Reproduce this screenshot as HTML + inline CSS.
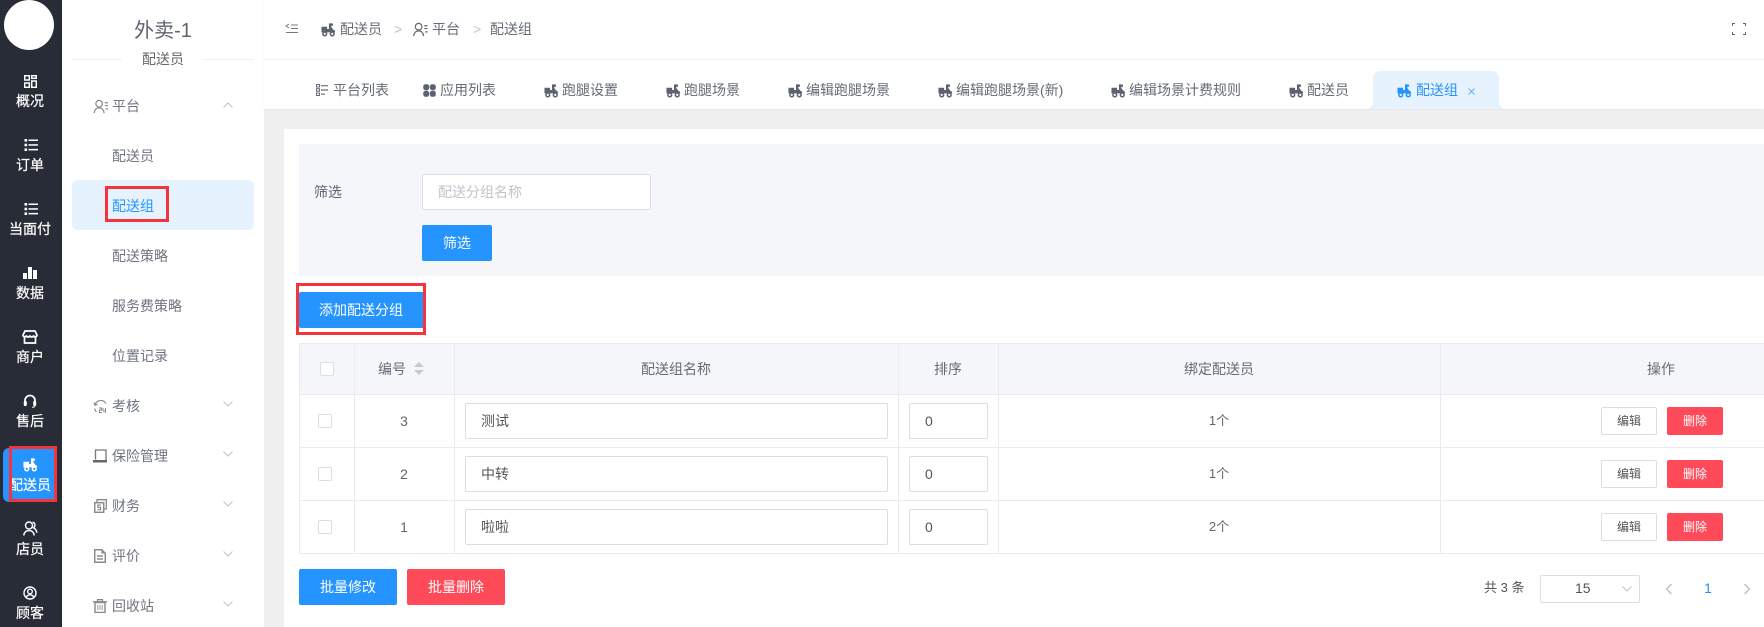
<!DOCTYPE html>
<html lang="zh"><head><meta charset="utf-8"><title>配送组</title>
<style>
*{box-sizing:border-box;margin:0;padding:0}
html,body{width:1764px;height:627px;overflow:hidden;background:#f0f0f0}
body{position:relative;font-family:"Liberation Sans","Noto Sans CJK SC",sans-serif;font-size:14px;color:#606266}
.a{position:absolute}
.t{position:absolute;height:20px;line-height:20px;white-space:nowrap}
.c{transform:translateX(-50%)}
svg{position:absolute;display:block}
.nav{position:absolute;left:0;top:0;width:62px;height:627px;background:#282c36}
.nl{position:absolute;left:0;width:60px;text-align:center;color:#fff;font-size:14px;height:20px;line-height:20px;white-space:nowrap;-webkit-text-stroke:.2px #fff}
.ni{color:#fff}
.m{color:#6f7480}
.mi{color:#8a8a8a}
.b{position:absolute;border-radius:2px;color:#fff;text-align:center;background:#2594ff}
.r{background:#ff4a59}
.inp{position:absolute;background:#fff;border:1px solid #dcdee6;border-radius:2px;height:36px;line-height:34px;color:#555}
.hl{position:absolute;background:#e9ebf1}
.cb{position:absolute;width:14px;height:14px;background:#fff;border:1px solid #dcdee6;border-radius:2px}
.tab{color:#666b75}
</style></head><body>
<svg width="0" height="0" style="position:absolute"><defs>
<symbol id="sc" viewBox="0 0 16 16"><path fill="currentColor" d="M.5 5h6v2.500h2V1.500h4l.5 2.500h-2v1.500l2 2.500 2 1.500v1.500H.5z"/><circle cx="4" cy="12.700" r="2" fill="none" stroke="currentColor" stroke-width="1.600"/><circle cx="12" cy="12.700" r="2" fill="none" stroke="currentColor" stroke-width="1.600"/></symbol>
<symbol id="list" viewBox="0 0 14 14"><g fill="currentColor"><rect x=".5" y="1" width="2.600" height="2.600"/><rect x=".5" y="5.700" width="2.600" height="2.600"/><rect x=".5" y="10.400" width="2.600" height="2.600"/><rect x="4.500" y="1.500" width="9.500" height="1.500"/><rect x="4.500" y="6.200" width="9.500" height="1.500"/><rect x="4.500" y="10.900" width="9.500" height="1.500"/></g></symbol>
<symbol id="usr" viewBox="0 0 16 16"><g fill="none" stroke="currentColor" stroke-width="1.300"><circle cx="6" cy="5" r="3.500"/><path d="M.7 15c.5-3.800 2.500-5.500 5.300-5.500s4.800 1.700 5.300 5.500"/><path d="M12 4h3.500M12 7h3.500M13 10.500h2.500"/></g></symbol>
<symbol id="chd" viewBox="0 0 10 6"><path d="M.5.500L5 5 9.500.500" fill="none" stroke="#c0c3ca" stroke-width="1"/></symbol>
<symbol id="chu" viewBox="0 0 10 6"><path d="M.5 5.500L5 1l4.500 4.500" fill="none" stroke="#c0c3ca" stroke-width="1"/></symbol>
</defs></svg>

<!-- dark nav -->
<div class="nav">
<div class="a" style="left:4px;top:0;width:50px;height:50px;border-radius:50%;background:#fff"></div>
<div class="a" style="left:3px;top:448px;width:54px;height:54px;background:#2594ff;border-radius:6px"></div>

<svg class="ni" style="left:24px;top:75px" width="13" height="13" viewBox="0 0 13 13"><g fill="none" stroke="#fff" stroke-width="1.500"><rect x=".7" y=".7" width="4.600" height="4.300"/><rect x="7.700" y=".7" width="4.600" height="2.600"/><rect x=".7" y="8" width="4.600" height="4.300"/><rect x="7.700" y="6" width="4.600" height="6.300"/></g></svg>
<div class="nl" style="top:91px">概况</div>
<svg class="ni" style="left:24px;top:138px" width="14" height="14"><use href="#list"/></svg>
<div class="nl" style="top:155px">订单</div>
<svg class="ni" style="left:24px;top:202px" width="14" height="14"><use href="#list"/></svg>
<div class="nl" style="top:219px">当面付</div>
<svg style="left:23px;top:267px" width="14" height="12" viewBox="0 0 14 12"><path fill="#fff" d="M0 6h4v6H0zM5 0h4v12H5zM10 3h4v9h-4z"/></svg>
<div class="nl" style="top:283px">数据</div>
<svg style="left:22px;top:330px" width="16" height="14" viewBox="0 0 16 14"><g fill="none" stroke="#fff" stroke-width="1.700"><path d="M3 1h10l2 4c0 2-3 2.500-3.500.5-.5 2-3 2-3.500 0-.5 2-3 2-3.500 0C4 7.500 1 7 1 5z"/><path d="M2.500 7v6h11V7"/></g></svg>
<div class="nl" style="top:347px">商户</div>
<svg style="left:23px;top:394px" width="14" height="14" viewBox="0 0 14 14"><path d="M2 9V6.500a5 5 0 0 1 10 0V9" fill="none" stroke="#fff" stroke-width="1.800"/><rect x=".8" y="7" width="3" height="5" rx="1" fill="#fff"/><rect x="10.200" y="7" width="3" height="5" rx="1" fill="#fff"/><path d="M12 12c-.5 1-1.500 1.300-3 1.300" stroke="#fff" fill="none"/></svg>
<div class="nl" style="top:411px">售后</div>
<svg style="left:23px;top:457px;color:#fff" width="15" height="15"><use href="#sc"/></svg>
<div class="nl" style="top:475px">配送员</div>
<svg style="left:23px;top:521px" width="15" height="15" viewBox="0 0 15 15"><g fill="none" stroke="#fff" stroke-width="1.400"><circle cx="6" cy="4.500" r="3.500"/><path d="M.7 14.500c.5-3.500 2.500-5 5.300-5s4.800 1.500 5.300 5"/><path d="M9.500 1.300c2.500 0 3.500 3.500 1 5.500 2 .8 3 3 3.500 5"/></g></svg>
<div class="nl" style="top:539px">店员</div>
<svg style="left:23px;top:586px" width="14" height="14" viewBox="0 0 14 14"><g fill="none" stroke="#fff" stroke-width="1.400"><circle cx="7" cy="7" r="6"/><circle cx="7" cy="5.500" r="2.300"/><path d="M3 11.500c1-2 2.500-2.700 4-2.700s3 .7 4 2.700"/></g></svg>
<div class="nl" style="top:603px">顾客</div>
</div>
<div class="a" style="left:9px;top:446px;width:48px;height:56px;border:3px solid #f5333a"></div>

<!-- secondary menu -->
<div class="a" style="left:62px;top:0;width:202px;height:627px;background:#fff"></div>
<div class="a" style="left:72px;top:59px;width:50px;height:1px;background:#f0f0f0"></div>
<div class="a" style="left:204px;top:59px;width:50px;height:1px;background:#f0f0f0"></div>
<div class="t c m" style="left:163px;top:19px;font-size:20px;height:24px;line-height:24px;color:#5f6470">外卖-1</div>
<div class="t c m" style="left:163px;top:49px;color:#666">配送员</div>

<svg class="mi" style="left:93px;top:99px" width="16" height="15"><use href="#usr"/></svg>
<div class="t m" style="left:112px;top:96px">平台</div>
<svg style="left:223px;top:102px" width="10" height="6"><use href="#chu"/></svg>
<div class="t m" style="left:112px;top:146px">配送员</div>
<div class="a" style="left:72px;top:180px;width:182px;height:50px;border-radius:6px;background:#e6f3ff"></div>
<div class="t" style="left:112px;top:196px;color:#2594ff">配送组</div>
<div class="a" style="left:105px;top:186px;width:64px;height:36px;border:3px solid #f5333a"></div>
<div class="t m" style="left:112px;top:246px">配送策略</div>
<div class="t m" style="left:112px;top:296px">服务费策略</div>
<div class="t m" style="left:112px;top:346px">位置记录</div>

<svg style="left:93px;top:399px" width="15" height="15" viewBox="0 0 15 15"><g fill="none" stroke="#8a8a8a" stroke-width="1.200"><path d="M2 6a6 6 0 0 1 11-1.500"/><path d="M1 3.500l1 2.700 2.500-1"/><path d="M1.500 9.500c.3 1.500 1 2.500 2 3.500"/></g><path d="M6 9h2.500v2H6.500v2.500H9M10 9v3h3M12.500 9v5" fill="none" stroke="#8a8a8a" stroke-width="1"/></svg>
<div class="t m" style="left:112px;top:396px">考核</div>
<svg style="left:223px;top:401px" width="10" height="6"><use href="#chd"/></svg>

<svg style="left:93px;top:449px" width="14" height="14" viewBox="0 0 14 14"><path d="M2.500 10.500V1h10.500v10.500" fill="none" stroke="#777" stroke-width="1.300"/><rect x="0" y="11" width="14" height="2.500" fill="#666"/></svg>
<div class="t m" style="left:112px;top:446px">保险管理</div>
<svg style="left:223px;top:451px" width="10" height="6"><use href="#chd"/></svg>

<svg style="left:94px;top:499px" width="13" height="14" viewBox="0 0 13 14"><path d="M3 3V.7h9.300V10H10" fill="none" stroke="#8a8a8a" stroke-width="1.300"/><rect x=".7" y="3.700" width="9" height="9.600" fill="#fff" stroke="#8a8a8a" stroke-width="1.500"/><path d="M6.800 6H3.800v2.300h2.800v2.400H3.500" fill="none" stroke="#777" stroke-width="1"/></svg>
<div class="t m" style="left:112px;top:496px">财务</div>
<svg style="left:223px;top:501px" width="10" height="6"><use href="#chd"/></svg>

<svg style="left:94px;top:549px" width="12" height="14" viewBox="0 0 12 14"><path d="M.7.700h7l3.600 3.600v9H.7z" fill="none" stroke="#8a8a8a" stroke-width="1.500"/><path d="M7.500.700v3.800h3.800" fill="#8a8a8a"/><path d="M3 7h6M3 10h6" stroke="#777" stroke-width="1.200"/></svg>
<div class="t m" style="left:112px;top:546px">评价</div>
<svg style="left:223px;top:551px" width="10" height="6"><use href="#chd"/></svg>

<svg style="left:93px;top:599px" width="14" height="14" viewBox="0 0 14 14"><path d="M2 3.500h10v10H2z" fill="none" stroke="#8a8a8a" stroke-width="1.400"/><path d="M0 2.800h14M4.500 2.500V.7h5v1.800" fill="none" stroke="#8a8a8a" stroke-width="1.300"/><path d="M7 6v5M4.800 6v5M9.200 6v5" stroke="#999"/></svg>
<div class="t m" style="left:112px;top:596px">回收站</div>
<svg style="left:223px;top:601px" width="10" height="6"><use href="#chd"/></svg>

<!-- header -->
<div class="a" style="left:264px;top:0;width:1500px;height:109px;background:#fff;box-shadow:0 1px 2px rgba(0,0,0,.04)"></div>
<div class="a" style="left:264px;top:59px;width:1500px;height:1px;background:#f2f2f2"></div>
<svg style="left:285px;top:23px" width="14" height="12" viewBox="0 0 14 12"><path d="M4 1L1 3l3 2M6 2h7M6 5.500h7M1 9.500h12" fill="none" stroke="#777" stroke-width="1"/></svg>
<svg style="left:321px;top:22px;color:#5c6270" width="15" height="15"><use href="#sc"/></svg>
<div class="t" style="left:340px;top:19px;color:#666b75">配送员</div>
<div class="t" style="left:394px;top:19px;color:#c0c4cc">&gt;</div>
<svg style="left:413px;top:22px;color:#666" width="15" height="15"><use href="#usr"/></svg>
<div class="t" style="left:432px;top:19px;color:#666b75">平台</div>
<div class="t" style="left:473px;top:19px;color:#c0c4cc">&gt;</div>
<div class="t" style="left:490px;top:19px;color:#666b75">配送组</div>
<svg style="left:1732px;top:23px" width="14" height="12" viewBox="0 0 14 12"><path d="M.5 3V.5h2.500M11 .5h2.500V3M.5 9v2.500h2.500M11 11.500h2.500V9" fill="none" stroke="#666" stroke-width="1"/></svg>

<!-- tabs -->
<svg style="left:316px;top:84px" width="13" height="12" viewBox="0 0 13 12"><g fill="none" stroke="#666b75"><rect x=".5" y=".5" width="3" height="2.500"/><rect x=".5" y="4.700" width="3" height="2.500"/><rect x=".5" y="9" width="3" height="2.500"/></g><path d="M5 1.700h7M5 6h7M5 10.200h4" stroke="#666b75" stroke-width="1.200"/></svg>
<div class="t tab" style="left:333px;top:80px">平台列表</div>
<svg style="left:423px;top:84px" width="13" height="13" viewBox="0 0 13 13"><g fill="#5c6270"><rect x=".2" y=".2" width="6" height="6" rx="2.400"/><rect x="6.800" y=".2" width="6" height="6" rx="2.400"/><rect x=".2" y="6.800" width="6" height="6" rx="2.400"/><rect x="6.800" y="6.800" width="6" height="6" rx="2.400"/></g></svg>
<div class="t tab" style="left:440px;top:80px">应用列表</div>
<svg style="left:544px;top:83px;color:#5c6270" width="15" height="15"><use href="#sc"/></svg>
<div class="t tab" style="left:562px;top:80px">跑腿设置</div>
<svg style="left:666px;top:83px;color:#5c6270" width="15" height="15"><use href="#sc"/></svg>
<div class="t tab" style="left:684px;top:80px">跑腿场景</div>
<svg style="left:788px;top:83px;color:#5c6270" width="15" height="15"><use href="#sc"/></svg>
<div class="t tab" style="left:806px;top:80px">编辑跑腿场景</div>
<svg style="left:938px;top:83px;color:#5c6270" width="15" height="15"><use href="#sc"/></svg>
<div class="t tab" style="left:956px;top:80px">编辑跑腿场景(新)</div>
<svg style="left:1111px;top:83px;color:#5c6270" width="15" height="15"><use href="#sc"/></svg>
<div class="t tab" style="left:1129px;top:80px">编辑场景计费规则</div>
<svg style="left:1289px;top:83px;color:#5c6270" width="15" height="15"><use href="#sc"/></svg>
<div class="t tab" style="left:1307px;top:80px">配送员</div>
<svg style="left:1365px;top:71px" width="142" height="38" viewBox="0 0 142 38"><path fill="#e6f3ff" d="M0 38c5 0 8-2 8-8V8c0-5 3-8 8-8h110c5 0 8 3 8 8v22c0 6 3 8 8 8z"/></svg>
<svg style="left:1397px;top:83px;color:#2594ff" width="15" height="15"><use href="#sc"/></svg>
<div class="t" style="left:1416px;top:80px;color:#2594ff">配送组</div>
<svg style="left:1468px;top:88px" width="7" height="7" viewBox="0 0 7 7"><path d="M.5.500l6 6M6.500.500l-6 6" stroke="#5aaeff" stroke-width=".9"/></svg>

<!-- card -->
<div class="a" style="left:284px;top:129px;width:1480px;height:498px;background:#fff"></div>
<div class="a" style="left:299px;top:144px;width:1465px;height:132px;background:#f5f6fa"></div>
<div class="t" style="left:314px;top:182px;color:#5f6470">筛选</div>
<div class="inp" style="left:422px;top:174px;width:229px;padding-left:15px;color:#c0c4cc">配送分组名称</div>
<div class="b" style="left:422px;top:225px;width:70px;height:36px;line-height:36px">筛选</div>
<div class="b" style="left:299px;top:292px;width:126px;height:36px;line-height:36px;padding-right:2px">添加配送分组</div>
<div class="a" style="left:296px;top:283px;width:130px;height:52px;border:3px solid #f5333a"></div>

<!-- table -->
<div class="a" style="left:299px;top:343px;width:1465px;height:51px;background:#f5f6fa"></div>
<div class="hl" style="left:299px;top:343px;width:1465px;height:1px"></div>
<div class="hl" style="left:299px;top:394px;width:1465px;height:1px"></div>
<div class="hl" style="left:299px;top:447px;width:1465px;height:1px"></div>
<div class="hl" style="left:299px;top:500px;width:1465px;height:1px"></div>
<div class="hl" style="left:299px;top:553px;width:1465px;height:1px"></div>
<div class="hl" style="left:299px;top:343px;width:1px;height:211px"></div>
<div class="hl" style="left:354px;top:343px;width:1px;height:211px"></div>
<div class="hl" style="left:454px;top:343px;width:1px;height:211px"></div>
<div class="hl" style="left:898px;top:343px;width:1px;height:211px"></div>
<div class="hl" style="left:998px;top:343px;width:1px;height:211px"></div>
<div class="hl" style="left:1440px;top:343px;width:1px;height:211px"></div>

<div class="cb" style="left:320px;top:362px"></div>
<div class="t" style="left:378px;top:359px;color:#666b75">编号</div>
<svg style="left:414px;top:362px" width="10" height="13" viewBox="0 0 10 13"><path d="M5 0l5 5H0zM5 13l5-5H0z" fill="#c6c9d0"/></svg>
<div class="t c" style="left:676px;top:359px;color:#666b75">配送组名称</div>
<div class="t c" style="left:948px;top:359px;color:#666b75">排序</div>
<div class="t c" style="left:1219px;top:359px;color:#666b75">绑定配送员</div>
<div class="t c" style="left:1661px;top:359px;color:#666b75">操作</div>

<!-- rows -->
<div class="cb" style="left:318px;top:414px"></div>
<div class="t c" style="left:404px;top:411px;color:#666">3</div>
<div class="inp" style="left:465px;top:403px;width:423px;padding-left:15px">测试</div>
<div class="inp" style="left:909px;top:403px;width:79px;padding-left:15px">0</div>
<div class="t c" style="left:1219px;top:411px;font-size:13px;color:#666">1个</div>
<div class="a" style="left:1601px;top:407px;width:56px;height:28px;border:1px solid #dcdee6;border-radius:2px;text-align:center;line-height:26px;font-size:12px;color:#555">编辑</div>
<div class="b r" style="left:1667px;top:407px;width:56px;height:28px;line-height:28px;font-size:12px">删除</div>

<div class="cb" style="left:318px;top:467px"></div>
<div class="t c" style="left:404px;top:464px;color:#666">2</div>
<div class="inp" style="left:465px;top:456px;width:423px;padding-left:15px">中转</div>
<div class="inp" style="left:909px;top:456px;width:79px;padding-left:15px">0</div>
<div class="t c" style="left:1219px;top:464px;font-size:13px;color:#666">1个</div>
<div class="a" style="left:1601px;top:460px;width:56px;height:28px;border:1px solid #dcdee6;border-radius:2px;text-align:center;line-height:26px;font-size:12px;color:#555">编辑</div>
<div class="b r" style="left:1667px;top:460px;width:56px;height:28px;line-height:28px;font-size:12px">删除</div>

<div class="cb" style="left:318px;top:520px"></div>
<div class="t c" style="left:404px;top:517px;color:#666">1</div>
<div class="inp" style="left:465px;top:509px;width:423px;padding-left:15px">啦啦</div>
<div class="inp" style="left:909px;top:509px;width:79px;padding-left:15px">0</div>
<div class="t c" style="left:1219px;top:517px;font-size:13px;color:#666">2个</div>
<div class="a" style="left:1601px;top:513px;width:56px;height:28px;border:1px solid #dcdee6;border-radius:2px;text-align:center;line-height:26px;font-size:12px;color:#555">编辑</div>
<div class="b r" style="left:1667px;top:513px;width:56px;height:28px;line-height:28px;font-size:12px">删除</div>

<!-- footer -->
<div class="b" style="left:299px;top:569px;width:98px;height:36px;line-height:36px">批量修改</div>
<div class="b r" style="left:407px;top:569px;width:98px;height:36px;line-height:36px">批量删除</div>
<div class="t" style="left:1484px;top:578px;color:#555;font-size:13px">共 3 条</div>
<div class="a" style="left:1540px;top:575px;width:100px;height:28px;border:1px solid #dcdee6;border-radius:2px"></div>
<div class="t" style="left:1575px;top:578px;color:#555">15</div>
<svg style="left:1622px;top:586px" width="10" height="6"><use href="#chd"/></svg>
<svg style="left:1665px;top:583px" width="8" height="12" viewBox="0 0 8 12"><path d="M6.500 1l-5 5 5 5" fill="none" stroke="#c0c4cc" stroke-width="1.500"/></svg>
<div class="t c" style="left:1708px;top:578px;color:#2594ff">1</div>
<svg style="left:1743px;top:583px" width="8" height="12" viewBox="0 0 8 12"><path d="M1.500 1l5 5-5 5" fill="none" stroke="#c0c4cc" stroke-width="1.500"/></svg>
</body></html>
